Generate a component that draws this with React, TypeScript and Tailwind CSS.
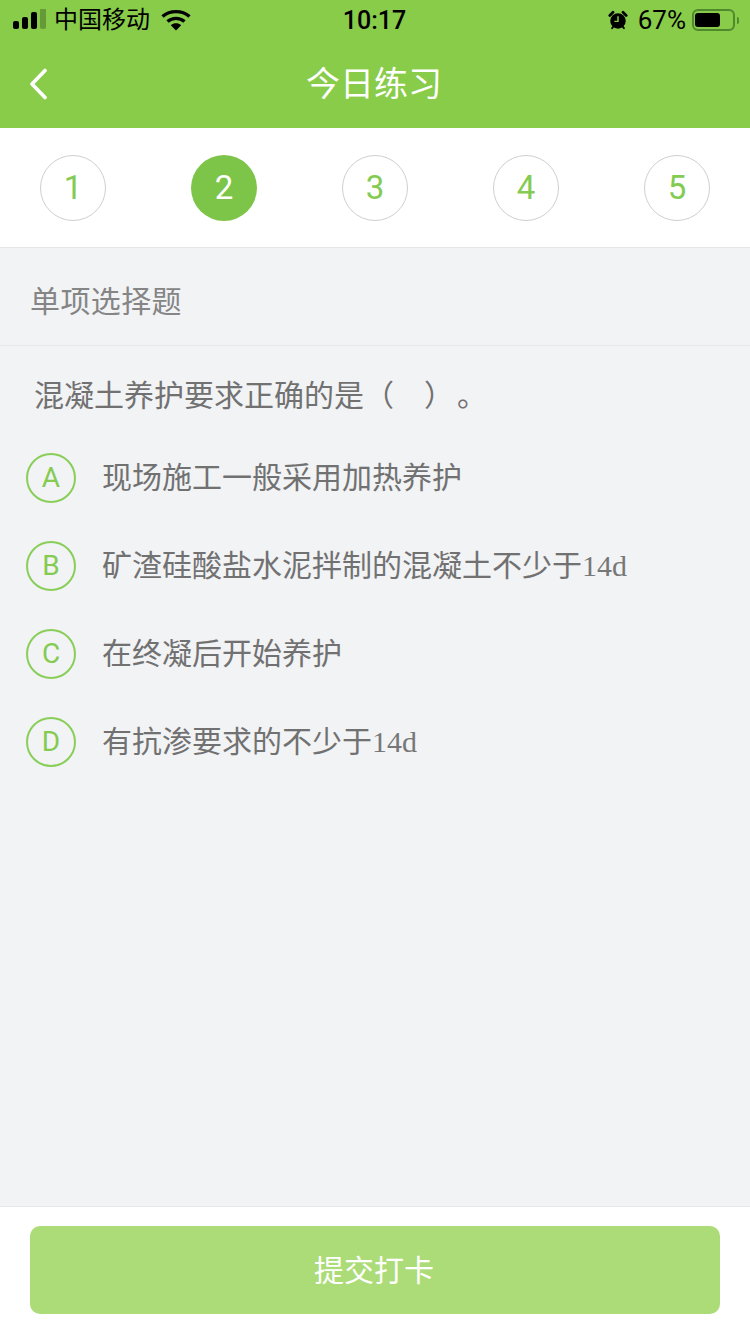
const FONT = "font-['Roboto','Noto_Sans_CJK_SC',sans-serif]";
const steps = [1, 2, 3, 4, 5];
const options = [
  { key: 'A', text: '现场施工一般采用加热养护' },
  { key: 'B', text: '矿渣硅酸盐水泥拌制的混凝土不少于', suffix: '14d' },
  { key: 'C', text: '在终凝后开始养护' },
  { key: 'D', text: '有抗渗要求的不少于', suffix: '14d' },
];

function StatusBar() {
  return (
    <div className="grid h-10 grid-cols-3 items-center pl-3 pr-[11px] text-black">
      <div className="flex items-center">
        <svg width="34" height="22" viewBox="0 0 34 22" className="mr-2">
          <rect x="1" y="12" width="6" height="8" rx="2" fill="#000" />
          <rect x="10" y="8" width="6" height="12" rx="2" fill="#000" />
          <rect x="19" y="3" width="6" height="17" rx="2" fill="#000" />
          <rect x="28" y="-1" width="6" height="21" rx="2" fill="#000" opacity="0.25" />
        </svg>
        <span className="text-[24px] leading-none font-normal">中国移动</span>
        <svg width="30" height="22" viewBox="0 0 30 22" className="ml-[11px]">
          <path d="M1.5 7.5C9 1 21 1 28.5 7.5" fill="none" stroke="#000" strokeWidth="3.4" />
          <path d="M6.5 12.5C11.5 8.3 18.5 8.3 23.5 12.5" fill="none" stroke="#000" strokeWidth="3.4" />
          <path d="M9.8 16.2C13 13.6 17 13.6 20.2 16.2L15 21.5Z" fill="#000" />
        </svg>
      </div>
      <div className="pr-[2px] text-center text-[25px] leading-none font-medium">10:17</div>
      <div className="flex items-center justify-end">
        <svg width="20" height="22" viewBox="0 0 22 22">
          <circle cx="11" cy="12" r="8.5" fill="#000" />
          <path d="M2 6L5.5 2.5M20 6L16.5 2.5" stroke="#000" strokeWidth="3" strokeLinecap="round" />
          <path d="M4.5 20l2-2.5M17.5 20l-2-2.5" stroke="#000" strokeWidth="2" strokeLinecap="round" />
          <path d="M11 7v5.5H7" fill="none" stroke="#88cc4a" strokeWidth="1.6" />
        </svg>
        <span className="ml-[10px] text-[26px] leading-none font-normal">67%</span>
        <div className="ml-[6px] flex h-[22px] w-[43px] items-center rounded-[6px] border-2 border-[#4f8a2c] p-[1px]">
          <div className="h-[14px] w-[25px] rounded-[3px] bg-black" />
        </div>
        <div className="ml-[2px] h-[7px] w-[2px] rounded-r-sm bg-[#4f8a2c]" />
      </div>
    </div>
  );
}

export default function App() {
  return (
    <div className={`flex h-[1334px] w-[750px] flex-col overflow-hidden bg-[#f2f3f5] ${FONT}`}>
      <div className="h-32 bg-[#88cc4a]">
        <StatusBar />
        <div className="relative flex h-[88px] items-center justify-center pr-[2px] pb-[1px]">
          <svg
            width="20"
            height="32"
            viewBox="0 0 20 32"
            className="absolute top-[28px] left-[29px]"
            fill="none"
            stroke="#fff"
            strokeWidth="3.6"
            strokeLinecap="round"
            strokeLinejoin="round"
          >
            <path d="M16 2.5L3 16l13 13.5" />
          </svg>
          <span className="text-[34px] leading-none font-normal text-white">今日练习</span>
        </div>
      </div>

      <div className="flex h-[120px] items-start justify-between border-b border-[#e6e6e6] bg-white px-10 pt-[27px]">
        {steps.map((n) =>
          n === 2 ? (
            <div
              key={n}
              className="flex h-[66px] w-[66px] items-center justify-center rounded-full bg-[#7cc548] text-[33px] font-normal text-white"
            >
              {n}
            </div>
          ) : (
            <div
              key={n}
              className="flex h-[66px] w-[66px] items-center justify-center rounded-full border border-[#cfcfcf] text-[33px] font-normal text-[#84cb52]"
            >
              {n}
            </div>
          ),
        )}
      </div>

      <div className="flex h-[98px] items-center border-b border-[#e6e7e9] px-[30px] pt-[10px] text-[30px] font-normal tracking-[0.4px] text-[#858585]">
        单项选择题
      </div>

      <div className="flex-1">
        <div className="flex h-[88px] items-center pl-[34px] pt-[11px] text-[30px] leading-none font-normal text-[#717171]">
          混凝土养护要求正确的是（<span className="w-[30px]" />）<span className="ml-[3px]">。</span>
        </div>
        {options.map((o) => (
          <div key={o.key} className="flex h-[88px] items-center pl-[26px]">
            <div className="flex h-[50px] w-[50px] items-center justify-center rounded-full border-2 border-[#8ace5a] text-[28px] font-normal text-[#84cb52]">
              {o.key}
            </div>
            <div className="ml-[26px] pb-[1px] text-[30px] leading-none font-normal text-[#717171]">
              {o.text}
              {o.suffix && <span className="font-['Liberation_Serif',serif] text-[#777777]">{o.suffix}</span>}
            </div>
          </div>
        ))}
      </div>

      <div className="h-32 border-t border-[#e6e7e9] bg-white px-[30px] pt-[19px]">
        <div className="flex h-[88px] items-center justify-center rounded-[10px] bg-[#abdc78] pr-[2px] text-[30px] font-normal text-white">
          提交打卡
        </div>
      </div>
    </div>
  );
}
